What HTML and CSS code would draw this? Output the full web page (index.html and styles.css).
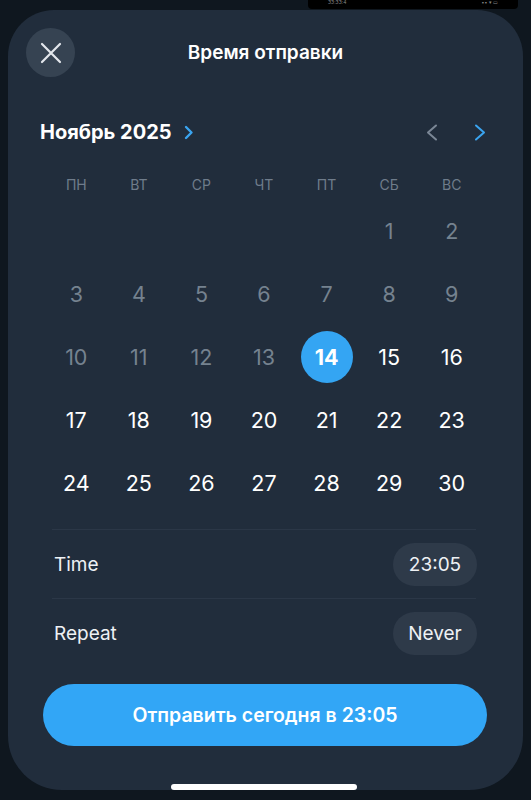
FILE: index.html
```html
<!DOCTYPE html>
<html lang="ru">
<head>
<meta charset="UTF-8">
<meta name="viewport" content="width=device-width, initial-scale=1.0">
<title>Время отправки</title>
<link rel="stylesheet" href="styles.css">
</head>
<body>

<div class="peek"><span>33:33:4</span><span>▪▪ ▾ ▭</span></div>

<div class="sheet">
    <div class="header">
        <button class="close" aria-label="Закрыть">
            <svg width="22" height="22" viewBox="0 0 22 22"><path d="M2 2 L20 20 M20 2 L2 20" stroke="#e3e7ec" stroke-width="2.2" stroke-linecap="round"/></svg>
        </button>
        <div class="title">Время отправки</div>
        <div></div>
    </div>

    <div class="month-row">
        <div class="month">Ноябрь 2025
            <svg width="10" height="15" viewBox="0 0 10 15"><path d="M2 2 L7.5 7.5 L2 13" fill="none" stroke="#3aa4f0" stroke-width="2.4" stroke-linecap="round" stroke-linejoin="round"/></svg>
        </div>
        <div class="nav">
            <svg width="13" height="17" viewBox="0 0 13 17"><path d="M11 1.5 L3 8.5 L11 15.5" fill="none" stroke="#7b8796" stroke-width="2" stroke-linecap="round" stroke-linejoin="round"/></svg>
            <svg width="13" height="17" viewBox="0 0 13 17"><path d="M2 1.5 L10 8.5 L2 15.5" fill="none" stroke="#3aa4f0" stroke-width="2" stroke-linecap="round" stroke-linejoin="round"/></svg>
        </div>
    </div>

    <div class="weekdays">
        <span>ПН</span><span>ВТ</span><span>СР</span><span>ЧТ</span><span>ПТ</span><span>СБ</span><span>ВС</span>
    </div>

    <div class="days">
        <span></span><span></span><span></span><span></span><span></span>
        <span class="past">1</span><span class="past">2</span>
        <span class="past">3</span><span class="past">4</span><span class="past">5</span><span class="past">6</span><span class="past">7</span><span class="past">8</span><span class="past">9</span>
        <span class="past">10</span><span class="past">11</span><span class="past">12</span><span class="past">13</span><span><b class="selected">14</b></span><span>15</span><span>16</span>
        <span>17</span><span>18</span><span>19</span><span>20</span><span>21</span><span>22</span><span>23</span>
        <span>24</span><span>25</span><span>26</span><span>27</span><span>28</span><span>29</span><span>30</span>
    </div>

    <div class="options">
        <div class="option">
            <span>Time</span>
            <span class="pill">23:05</span>
        </div>
        <div class="option">
            <span>Repeat</span>
            <span class="pill">Never</span>
        </div>
    </div>

    <button class="send">Отправить сегодня в 23:05</button>
</div>

<div class="home-bar"></div>

</body>
</html>
```

FILE: styles.css
```css
body {
    margin: 0;
    height: 800px;
    overflow: hidden;
    font-family: Inter, "Noto Sans", sans-serif;
    background-color: #0f171f;
    padding-top: 10px;
    box-sizing: border-box;
}
.peek {
    position: absolute;
    top: 0;
    left: 308px;
    width: 210px;
    height: 9px;
    background-color: #000;
    border-radius: 0 0 4px 4px;
    display: flex;
    justify-content: space-between;
    padding: 0 20px;
    box-sizing: border-box;
    font-size: 5px;
    line-height: 4px;
    color: #888;
    overflow: hidden;
}
.sheet {
    margin: 0 8px;
    height: 780px;
    background-color: #212d3c;
    border-radius: 46px 46px 54px 54px;
    box-sizing: border-box;
    padding-top: 18px;
    color: #fff;
}
.header {
    display: grid;
    grid-template-columns: 49px 1fr 49px;
    align-items: center;
    padding: 0 18px;
}
.close {
    width: 49px;
    height: 49px;
    border-radius: 50%;
    border: none;
    background-color: #364352;
    display: flex;
    align-items: center;
    justify-content: center;
    padding: 0;
}
.title {
    text-align: center;
    font-size: 19px;
    font-weight: 600;
    color: #fff;
}
.month-row {
    display: flex;
    justify-content: space-between;
    align-items: center;
    height: 30px;
    margin-top: 40px;
    padding: 0 36px 0 32px;
}
.month {
    display: flex;
    align-items: center;
    gap: 12px;
    font-size: 20px;
    font-weight: 700;
}
.nav {
    display: flex;
    gap: 36px;
    align-items: center;
}
.weekdays,
.days {
    display: grid;
    grid-template-columns: repeat(7, 1fr);
    margin: 0 40px 0 37px;
    text-align: center;
}
.weekdays {
    margin-top: 22px;
    height: 30px;
    align-items: center;
    font-size: 14px;
    color: #6f7c8b;
}
.days {
    grid-auto-rows: 63px;
    align-items: center;
    justify-items: center;
    font-size: 21.5px;
    color: #fff;
}
.days .past {
    color: #75828f;
}
.days .selected {
    display: flex;
    align-items: center;
    justify-content: center;
    width: 52px;
    height: 52px;
    border-radius: 50%;
    background-color: #34a5f3;
    font-weight: 700;
}
.options {
    margin: 15px 47px 0 44px;
}
.option {
    display: flex;
    justify-content: space-between;
    align-items: center;
    height: 68px;
    border-top: 1px solid #2b3747;
    font-size: 19px;
    color: #eef1f4;
    padding-left: 2px;
}
.pill {
    display: flex;
    align-items: center;
    justify-content: center;
    width: 84px;
    height: 43px;
    border-radius: 22px;
    background-color: #2e3a49;
    margin-right: -1px;
}
.send {
    display: block;
    width: 444px;
    height: 62px;
    margin: 17px 0 0 35px;
    border: none;
    border-radius: 31px;
    background-color: #32a6f6;
    color: #fff;
    font-family: inherit;
    font-size: 19.5px;
    font-weight: 600;
}
.home-bar {
    position: absolute;
    left: 171px;
    top: 784px;
    width: 186px;
    height: 6px;
    border-radius: 3px;
    background-color: #fff;
}
```
